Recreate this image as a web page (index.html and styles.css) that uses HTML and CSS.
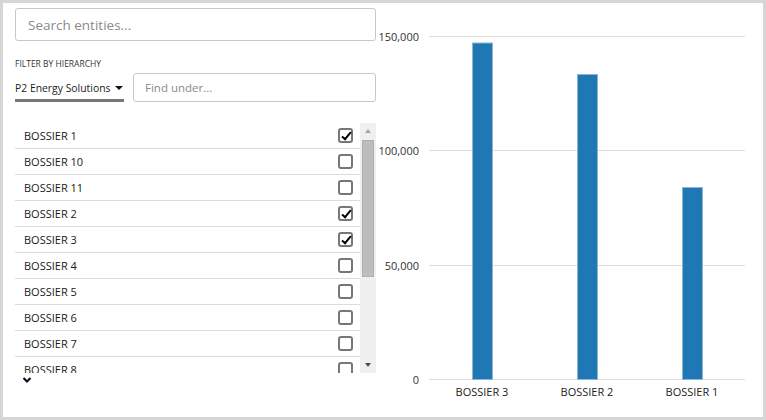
FILE: index.html
```html
<!DOCTYPE html>
<html lang="en">
<head>
    <meta charset="UTF-8">
    <title>Entity Picker</title>
    <link rel="stylesheet" href="styles.css">
</head>
<body>
<div class="frame">
    <div class="picker">
        <input class="search-box" type="text" placeholder="Search entities...">
        <div class="filter-label">Filter by hierarchy</div>
        <div class="filter-row">
            <div class="hierarchy-select">
                <span>P2 Energy Solutions</span>
                <span class="caret"></span>
            </div>
            <input class="find-box" type="text" placeholder="Find under...">
        </div>
        <div class="list-wrap">
            <ul class="entity-list">
                <li><span>BOSSIER 1</span><span class="check on"></span></li>
                <li><span>BOSSIER 10</span><span class="check"></span></li>
                <li><span>BOSSIER 11</span><span class="check"></span></li>
                <li><span>BOSSIER 2</span><span class="check on"></span></li>
                <li><span>BOSSIER 3</span><span class="check on"></span></li>
                <li><span>BOSSIER 4</span><span class="check"></span></li>
                <li><span>BOSSIER 5</span><span class="check"></span></li>
                <li><span>BOSSIER 6</span><span class="check"></span></li>
                <li><span>BOSSIER 7</span><span class="check"></span></li>
                <li><span>BOSSIER 8</span><span class="check"></span></li>
                <li><span>BOSSIER 9</span><span class="check"></span></li>
            </ul>
            <div class="scrollbar">
                <span class="arrow up"></span>
                <div class="track"><div class="thumb"></div></div>
                <span class="arrow down"></span>
            </div>
        </div>
        <svg class="more" width="10" height="8" viewBox="0 0 10 8">
            <path d="M1.5 2 L5 5.5 L8.5 2" fill="none" stroke="#111" stroke-width="2.2"/>
        </svg>
    </div>

    <div class="chart">
        <svg width="380" height="414" viewBox="0 0 380 414">
            <g class="grid">
                <line x1="53" y1="33.5" x2="369" y2="33.5"/>
                <line x1="53" y1="147.5" x2="369" y2="147.5"/>
                <line x1="53" y1="262.5" x2="369" y2="262.5"/>
                <line x1="53" y1="376.5" x2="369" y2="376.5"/>
            </g>
            <g class="ticks">
                <text x="43" y="38">150,000</text>
                <text x="43" y="152">100,000</text>
                <text x="43" y="267">50,000</text>
                <text x="43" y="381">0</text>
            </g>
            <g class="bars">
                <rect x="96.5" y="40" width="20" height="336.5"/>
                <rect x="201.5" y="71.5" width="20" height="305"/>
                <rect x="306.5" y="184.5" width="20" height="192"/>
            </g>
            <g class="labels">
                <text x="106" y="393">BOSSIER 3</text>
                <text x="211" y="393">BOSSIER 2</text>
                <text x="316" y="393">BOSSIER 1</text>
            </g>
        </svg>
    </div>
</div>
</body>
</html>
```

FILE: styles.css
```css
body {
    margin: 0;
    font-family: 'Open Sans', 'Noto Sans', sans-serif;
    color: #222;
}

.frame {
    width: 766px;
    height: 420px;
    box-sizing: border-box;
    border: 3px solid #d6d6d6;
    background: white;
    display: flex;
}

.picker {
    width: 361px;
    padding: 5px 0 0 12px;
    display: flex;
    flex-direction: column;
}

.search-box {
    height: 33px;
    box-sizing: border-box;
    border: 1px solid #c8c8c8;
    border-radius: 3px;
    padding: 0 12px;
    font-family: inherit;
    font-size: 13.5px;
    color: #333;
    outline: none;
}

.search-box::placeholder,
.find-box::placeholder {
    color: #8a8a8a;
}

.filter-label {
    margin-top: 17px;
    font-size: 8.5px;
    text-transform: uppercase;
    color: #333;
    line-height: 11px;
}

.filter-row {
    display: flex;
    gap: 9px;
    margin-top: 4px;
}

.hierarchy-select {
    width: 109px;
    height: 29px;
    box-sizing: border-box;
    padding-top: 3px;
    border-bottom: 3px solid #777;
    display: flex;
    align-items: center;
    justify-content: space-between;
    font-size: 10.4px;
    color: #222;
    white-space: nowrap;
}

.caret {
    width: 0;
    height: 0;
    border-left: 4px solid transparent;
    border-right: 4px solid transparent;
    border-top: 4px solid #111;
    margin-right: 1px;
}

.find-box {
    flex: 1;
    height: 29px;
    box-sizing: border-box;
    border: 1px solid #c8c8c8;
    border-radius: 3px;
    padding: 0 11px;
    font-family: inherit;
    font-size: 11.5px;
    outline: none;
}

.list-wrap {
    margin-top: 21px;
    height: 250px;
    display: flex;
    overflow: hidden;
}

.entity-list {
    list-style: none;
    margin: 0;
    padding: 0;
    flex: 1;
    overflow: hidden;
}

.entity-list li {
    height: 26px;
    box-sizing: border-box;
    border-bottom: 1px solid #dcdcdc;
    display: flex;
    align-items: center;
    justify-content: space-between;
    padding: 0 7px 0 9px;
    font-size: 11px;
    color: #1a1a1a;
}

.check {
    width: 15px;
    height: 15px;
    box-sizing: border-box;
    border: 2px solid #777;
    border-radius: 3px;
    position: relative;
}

.check.on::after {
    content: "";
    position: absolute;
    left: 4px;
    top: 0px;
    width: 3px;
    height: 8px;
    border-right: 2px solid #000;
    border-bottom: 2px solid #000;
    transform: rotate(40deg);
}

.scrollbar {
    width: 16px;
    background: #f0f0f0;
    display: flex;
    flex-direction: column;
    align-items: center;
}

.arrow {
    width: 0;
    height: 0;
    border-left: 3.5px solid transparent;
    border-right: 3.5px solid transparent;
    margin: 6px 0;
}

.arrow.up {
    border-bottom: 4px solid #a3a3a3;
}

.arrow.down {
    border-top: 4px solid #505050;
}

.track {
    flex: 1;
    width: 100%;
}

.thumb {
    margin: 1px auto 0;
    width: 12px;
    height: 137px;
    background: #bdbdbd;
    border: 1px solid #b0b0b0;
    box-sizing: border-box;
}

.more {
    margin: 3px 0 0 7px;
}

.chart {
    flex: 1;
}

.chart svg {
    display: block;
}

.grid line {
    stroke: #dddddd;
    stroke-width: 1;
}

.ticks text {
    font-size: 11px;
    fill: #333;
    text-anchor: end;
}

.bars rect {
    fill: #1f77b4;
    stroke: #8cb6d8;
    stroke-width: 1;
}

.labels text {
    font-size: 11px;
    fill: #222;
    text-anchor: middle;
}
```
